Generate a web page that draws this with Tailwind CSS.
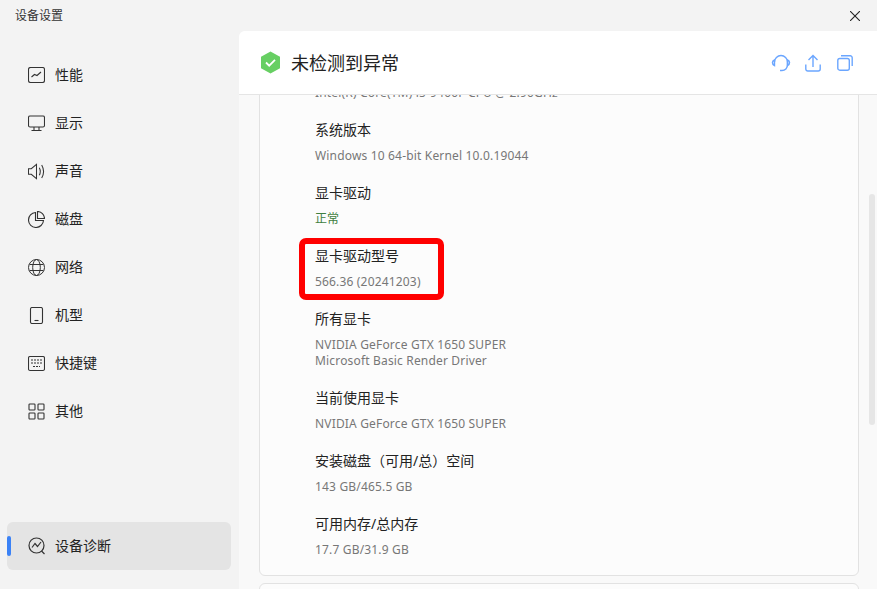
<!DOCTYPE html>
<html lang="zh-CN">
<head>
    <meta charset="UTF-8">
    <title>设备设置</title>
    <script src="https://cdn.jsdelivr.net/npm/@tailwindcss/browser@4"></script>
</head>
<body class="bg-[#f3f3f3] text-[#1f1f1f] font-['Noto_Sans','Noto_Sans_CJK_SC',sans-serif] overflow-hidden">
<div class="w-[877px] h-[589px] flex flex-col overflow-hidden">

    <!-- Title bar -->
    <div class="h-[31px] shrink-0 flex items-center justify-between pl-[15px] pr-[17px]">
        <span class="text-[12px] text-[#333]">设备设置</span>
        <svg class="w-[10px] h-[10px]" viewBox="0 0 10 10" fill="none" stroke="#222" stroke-width="1.1"><path d="M0 0l10 10M10 0L0 10"/></svg>
    </div>

    <div class="flex flex-1 min-h-0">
        <!-- Sidebar -->
        <aside class="w-[239px] shrink-0 flex flex-col pl-[7px] pr-[8px] pt-[20px] pb-[19px] text-[14px] text-[#222]">
            <div class="h-[48px] flex items-center gap-[10px] pl-[21px]">
                <svg class="w-[17px] h-[17px]" viewBox="0 0 17 17" fill="none" stroke="#333" stroke-width="1.1"><rect x="0.5" y="0.5" width="16" height="15" rx="2"/><path d="M3.5 10l3-2.5 2.5 1 4-3.5"/></svg>
                <span class="pb-[2px]">性能</span>
            </div>
            <div class="h-[48px] flex items-center gap-[10px] pl-[21px]">
                <svg class="w-[17px] h-[17px]" viewBox="0 0 17 17" fill="none" stroke="#333" stroke-width="1.1"><rect x="0.5" y="1" width="16" height="11" rx="1.5"/><path d="M6 12v3.5M11 12v3.5M3.5 15.5h10"/></svg>
                <span class="pb-[2px]">显示</span>
            </div>
            <div class="h-[48px] flex items-center gap-[10px] pl-[21px]">
                <svg class="w-[17px] h-[17px]" viewBox="0 0 18 17" fill="none" stroke="#333" stroke-width="1.1"><path d="M0.5 5.5h3L9 1v15l-5.500-4.500h-3z"/><path d="M12 4.500q2 4 0 8M14.500 1.500q4 7 0 14"/></svg>
                <span class="pb-[2px]">声音</span>
            </div>
            <div class="h-[48px] flex items-center gap-[10px] pl-[21px]">
                <svg class="w-[17px] h-[17px]" viewBox="0 0 17 17" fill="none" stroke="#333" stroke-width="1.1"><path d="M7.500 1.500a7.500 7.500 0 1 0 8 8h-8z"/><path d="M9.500 0.500a7 7 0 0 1 7 7h-7z"/></svg>
                <span class="pb-[2px]">磁盘</span>
            </div>
            <div class="h-[48px] flex items-center gap-[10px] pl-[21px]">
                <svg class="w-[17px] h-[17px]" viewBox="0 0 17 17" fill="none" stroke="#333" stroke-width="1"><circle cx="8.500" cy="8.500" r="8"/><ellipse cx="8.500" cy="8.500" ry="8" rx="3.800"/><path d="M1.500 5.500h14M1.500 11.500h14"/></svg>
                <span class="pb-[2px]">网络</span>
            </div>
            <div class="h-[48px] flex items-center gap-[10px] pl-[21px]">
                <svg class="w-[17px] h-[17px]" viewBox="0 0 17 17" fill="none" stroke="#333" stroke-width="1.1"><rect x="2.500" y="0.500" width="12" height="16" rx="1.500"/><path d="M6.500 13.500h4"/></svg>
                <span class="pb-[2px]">机型</span>
            </div>
            <div class="h-[48px] flex items-center gap-[10px] pl-[21px]">
                <svg class="w-[17px] h-[17px]" viewBox="0 0 17 17" fill="none" stroke="#333" stroke-width="1.1"><rect x="0.500" y="1.500" width="16" height="14" rx="1.500"/><path d="M3 5h11M3 8h11M5 11.500h7" stroke-dasharray="2 1"/></svg>
                <span class="pb-[2px]">快捷键</span>
            </div>
            <div class="h-[48px] flex items-center gap-[10px] pl-[21px]">
                <svg class="w-[17px] h-[17px]" viewBox="0 0 17 17" fill="none" stroke="#333" stroke-width="1.1"><rect x="1" y="1" width="6" height="6" rx="0.800"/><rect x="10" y="1" width="6" height="6" rx="0.800"/><rect x="1" y="10" width="6" height="6" rx="0.800"/><rect x="10" y="10" width="6" height="6" rx="0.800"/></svg>
                <span class="pb-[2px]">其他</span>
            </div>

            <div class="relative mt-auto h-[48px] flex items-center gap-[10px] pl-[21px] bg-[#e4e4e4] rounded-[6px]">
                <div class="absolute left-0 top-[14px] w-[4px] h-[20px] bg-[#3b82f6] rounded-[2px]"></div>
                <svg class="w-[18px] h-[18px]" viewBox="0 0 18 18" fill="none" stroke="#333" stroke-width="1.2"><circle cx="8.500" cy="8.500" r="7.500"/><path d="M4 10.500l3-4 2.500 3 3.500-4.500M13.500 14l3 3"/></svg>
                <span class="ml-[-1px] pb-[2px]">设备诊断</span>
            </div>
        </aside>

        <!-- Main panel -->
        <main class="flex-1 min-w-0 flex flex-col bg-[#f9f9f9] rounded-tl-[6px] overflow-hidden">
            <header class="h-[64px] shrink-0 bg-white border-b border-[#e5e5e5] flex items-center pl-[21px] pr-[24px]">
                <svg class="w-[21px] h-[23px]" viewBox="0 0 21 23"><path d="M10.500 0.500l9.500 5.300v11.400l-9.500 5.300-9.500-5.300V5.800z" fill="#67cf63"/><path d="M6 11.500l3.200 3.200 5.800-5.800" fill="none" stroke="#fff" stroke-width="1.800"/></svg>
                <h1 class="ml-[10px] pt-[2px] text-[18px] text-[#222]">未检测到异常</h1>
                <div class="ml-auto flex items-center gap-[14px]">
                    <svg class="w-[20px] h-[20px]" viewBox="0 0 20 20" fill="none" stroke="#6ba6ff" stroke-width="1.400"><path d="M3.500 9a6.500 6.500 0 0 1 13 0v3a5.500 5.500 0 0 1-5.500 5.500H9"/><path d="M3.500 7C1 8 0.500 11 3.500 12.500zM16.500 7c2.500 1 3 4 0 5.500z"/></svg>
                    <svg class="w-[16px] h-[18px]" viewBox="0 0 16 18" fill="none" stroke="#6ba6ff" stroke-width="1.400"><path d="M8 13V1.500M3.500 6L8 1.500 12.500 6M0.800 10.500v4.500a2 2 0 0 0 2 2h10.400a2 2 0 0 0 2-2v-4.500"/></svg>
                    <svg class="ml-[2px] w-[16px] h-[16px]" viewBox="0 0 16 16" fill="none" stroke="#6ba6ff" stroke-width="1.400"><rect x="0.800" y="3.500" width="11.500" height="11.700" rx="2"/><path d="M4 0.800h9.200a2 2 0 0 1 2 2V11"/></svg>
                </div>
            </header>

            <div class="relative flex-1 min-h-0 overflow-hidden pl-[20px] pr-[18px]">
                <!-- Info card, scrolled so that the first row is cut by the header -->
                <section class="relative mt-[-59px] h-[540px] bg-[#fcfcfc] border border-[#e2e2e2] rounded-[6px] pl-[55px] pt-[19px] text-[12px] tracking-[0.17px]">
                    <div class="h-[63px] pt-[29px]">
                        <div class="leading-[16px] text-[#777]">Intel(R) Core(TM) i5-9400F CPU @ 2.90GHz</div>
                    </div>
                    <div class="h-[63px]">
                        <div class="text-[14px] leading-[22px] tracking-normal text-[#222]">系统版本</div>
                        <div class="mt-[7px] leading-[16px] text-[#777]">Windows 10 64-bit Kernel 10.0.19044</div>
                    </div>
                    <div class="h-[63px]">
                        <div class="text-[14px] leading-[22px] tracking-normal text-[#222]">显卡驱动</div>
                        <div class="mt-[7px] leading-[16px] tracking-normal text-[#3f7f3f]">正常</div>
                    </div>
                    <div class="h-[63px]">
                        <div class="text-[14px] leading-[22px] tracking-normal text-[#222]">显卡驱动型号</div>
                        <div class="mt-[7px] leading-[16px] text-[#777]">566.36 (20241203)</div>
                    </div>
                    <div class="h-[79px]">
                        <div class="text-[14px] leading-[22px] tracking-normal text-[#222]">所有显卡</div>
                        <div class="mt-[7px] leading-[16px] text-[#777]">NVIDIA GeForce GTX 1650 SUPER<br>Microsoft Basic Render Driver</div>
                    </div>
                    <div class="h-[63px]">
                        <div class="text-[14px] leading-[22px] tracking-normal text-[#222]">当前使用显卡</div>
                        <div class="mt-[7px] leading-[16px] text-[#777]">NVIDIA GeForce GTX 1650 SUPER</div>
                    </div>
                    <div class="h-[63px]">
                        <div class="text-[14px] leading-[22px] tracking-normal text-[#222]">安装磁盘（可用/总）空间</div>
                        <div class="mt-[7px] leading-[16px] text-[#777]">143 GB/465.5 GB</div>
                    </div>
                    <div class="h-[63px]">
                        <div class="text-[14px] leading-[22px] tracking-normal text-[#222]">可用内存/总内存</div>
                        <div class="mt-[7px] leading-[16px] text-[#777]">17.7 GB/31.9 GB</div>
                    </div>
                </section>
                <section class="mt-[7px] h-[40px] bg-[#fcfcfc] border border-[#e2e2e2] rounded-[6px]"></section>

                <!-- Overlays: annotation box and scrollbar -->
                <div class="absolute left-[60px] top-[143px] w-[145px] h-[62px] border-[6px] border-[#ff0000] rounded-[7px]"></div>
                <div class="absolute right-[2px] top-[99px] w-[6px] h-[231px] bg-[#e6e6e6] rounded-[3px]"></div>
            </div>
        </main>
    </div>
</div>
</body>
</html>
